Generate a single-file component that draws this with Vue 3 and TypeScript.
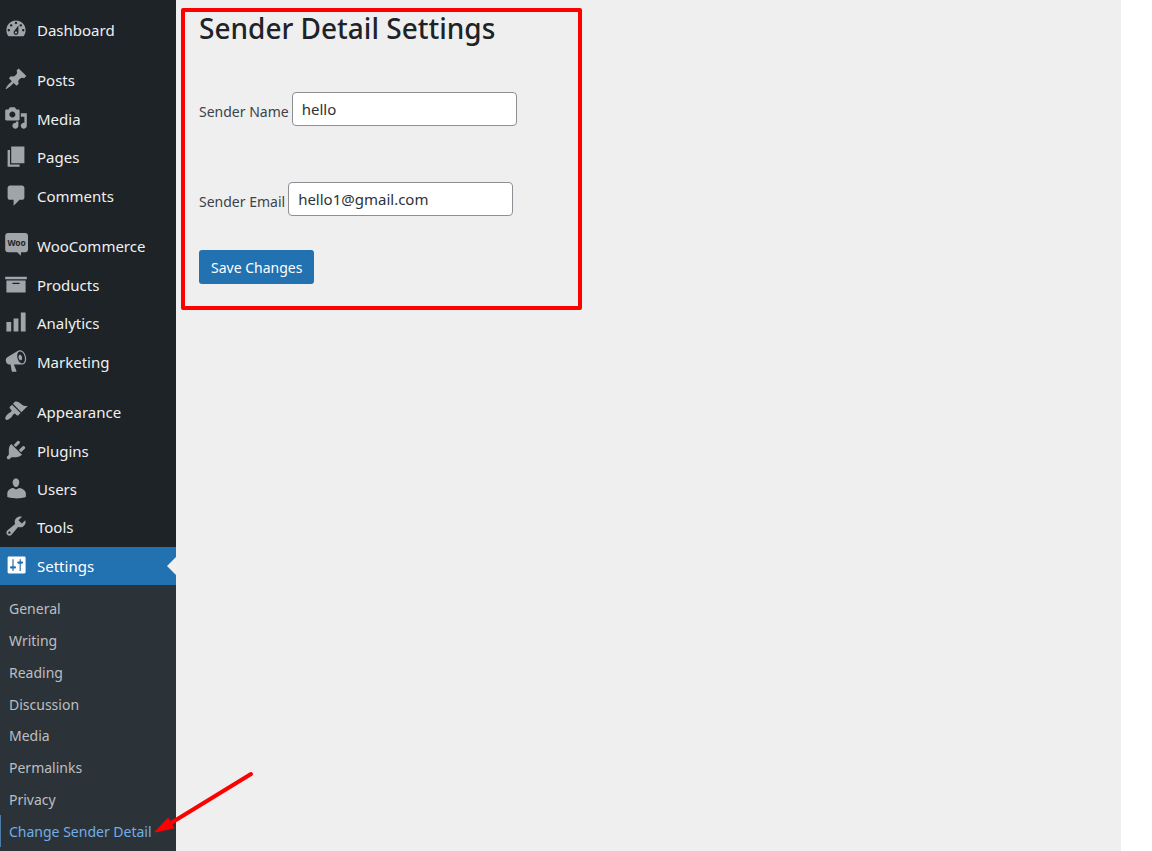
<script setup lang="ts">
import { ref } from 'vue'

interface MenuItem {
  label: string
  icon: string
  woo?: boolean
  current?: boolean
}

const groups: { name: string; items: MenuItem[] }[] = [
  {
    name: 'group-home',
    items: [
      {
        label: 'Dashboard',
        icon: 'M3.76 16h12.48c1.1-1.37 1.76-3.11 1.76-5 0-4.42-3.58-8-8-8s-8 3.58-8 8c0 1.89.66 3.63 1.76 5zM10 4c.55 0 1 .45 1 1s-.45 1-1 1-1-.45-1-1 .45-1 1-1zM6 6c.55 0 1 .45 1 1s-.45 1-1 1-1-.45-1-1 .45-1 1-1zm8 0c.55 0 1 .45 1 1s-.45 1-1 1-1-.45-1-1 .45-1 1-1zm-5.37 5.55L12 7v6c0 1.1-.9 2-2 2s-2-.9-2-2c0-.57.24-1.08.63-1.45zM4 10c.55 0 1 .45 1 1s-.45 1-1 1-1-.45-1-1 .45-1 1-1zm12 0c.55 0 1 .45 1 1s-.45 1-1 1-1-.45-1-1 .45-1 1-1zm-5 3c0-.55-.45-1-1-1s-1 .45-1 1 .45 1 1 1 1-.45 1-1z',
      },
    ],
  },
  {
    name: 'group-content',
    items: [
      {
        label: 'Posts',
        icon: 'M10.44 3.02l1.82-1.82 6.36 6.35-1.83 1.82c-1.05-.68-2.48-.57-3.41.36l-.75.75c-.92.93-1.04 2.35-.35 3.41l-1.83 1.82-2.41-2.41-2.8 2.79c-.42.42-3.38 2.71-3.8 2.29s1.86-3.39 2.28-3.81l2.79-2.79L4.1 9.36l1.83-1.82c1.05.69 2.48.57 3.4-.36l.75-.75c.93-.92 1.05-2.35.36-3.41z',
      },
      {
        label: 'Media',
        icon: 'M13 11V4c0-.55-.45-1-1-1h-1.67L9 1H5L3.67 3H2c-.55 0-1 .45-1 1v7c0 .55.45 1 1 1h10c.55 0 1-.45 1-1zM7 4.5c1.38 0 2.5 1.12 2.5 2.5S8.38 9.5 7 9.5 4.5 8.38 4.5 7 5.62 4.5 7 4.5zM14 6h5v10.5c0 1.38-1.12 2.5-2.5 2.5S14 17.88 14 16.5s1.12-2.5 2.5-2.5c.17 0 .34.02.5.05V9h-3V6zm-4 8.05V13h2v3.5c0 1.38-1.12 2.5-2.5 2.5S7 17.88 7 16.5 8.12 14 9.5 14c.17 0 .34.02.5.05z',
      },
      { label: 'Pages', icon: 'M6 16V2h11v14H6zm-1 1h8v2H3V5h2v12z' },
      {
        label: 'Comments',
        icon: 'M5 2h10c1.1 0 2 .9 2 2v8c0 1.1-.9 2-2 2h-2l-5 5v-5H5c-1.1 0-2-.9-2-2V4c0-1.1.9-2 2-2z',
      },
    ],
  },
  {
    name: 'group-store',
    items: [
      { label: 'WooCommerce', icon: 'M3.5 0h14a2.5 2.5 0 0 1 2.5 2.5v11a2.5 2.5 0 0 1-2.5 2.5h-3.3l-.2 3-3-3H3.5A2.5 2.5 0 0 1 1 13.5v-11A2.5 2.5 0 0 1 3.5 0z', woo: true },
      { label: 'Products', icon: 'M19 4v2H1V4h18zM2 7h16v10H2V7zm11 3V9H7v1h6z' },
      { label: 'Analytics', icon: 'M18 18V2h-4v16h4zm-6 0V7H8v11h4zm-6 0v-8H2v8h4z' },
      {
        label: 'Marketing',
        icon: 'M18.15 5.94c.46 1.62.38 3.22-.02 4.48-.42 1.28-1.26 2.18-2.3 2.48-.16.06-.26.06-.4.06-.06.02-.12.02-.18.02-.06.02-.14.02-.22.02h-6.8l2.22 5.5c.02.14-.06.26-.14.34-.08.1-.24.16-.34.16H6.95c-.1 0-.26-.06-.34-.16-.08-.08-.16-.2-.14-.34l-1-5.5H4.25l-.02-.02c-.5.06-1.08-.18-1.54-.62s-.88-1.08-1.06-1.88c-.24-.8-.2-1.56-.02-2.2.18-.62.58-1.08 1.06-1.3l.02-.02 9-5.4c.1-.06.18-.1.24-.16.06-.04.14-.08.24-.12.16-.08.28-.12.5-.18 1.04-.3 2.24.1 3.22.98s1.84 2.24 2.26 3.86zm-2.58 5.98h-.02c.4-.1.74-.34 1.04-.7.58-.7.86-1.76.86-3.04 0-.64-.1-1.3-.28-1.98-.34-1.36-1.02-2.5-1.78-3.24s-1.68-1.1-2.46-.88c-.82.22-1.4.96-1.7 2-.32 1.04-.28 2.36.06 3.72.38 1.36 1 2.5 1.8 3.24.78.74 1.62 1.1 2.48.88zm-2.54-7.08c.22-.04.42-.02.62.04.38.16.76.48 1.02 1s.42 1.2.42 1.78c0 .3-.04.56-.12.8-.18.48-.44.84-.86.94-.34.1-.8-.06-1.14-.4s-.64-.86-.78-1.5c-.18-.62-.12-1.24.02-1.72s.48-.84.82-.94z',
      },
    ],
  },
  {
    name: 'group-system',
    items: [
      {
        label: 'Appearance',
        icon: 'M14.48 11.06L7.41 3.99l1.5-1.5c.5-.56 2.3-.47 3.51.32 1.21.8 1.43 1.28 2.91 2.1 1.18.64 2.45 1.26 4.45.85zm-.71.71L6.7 4.7 4.93 6.47c-.39.39-.39 1.02 0 1.41l1.06 1.06c.39.39.39 1.03 0 1.42-.6.6-1.43 1.11-2.21 1.69-.35.26-.7.53-1.01.84C1.43 14.23.4 16.08 1.4 17.07c.99 1 2.84-.03 4.18-1.36.31-.31.58-.66.85-1.02.57-.78 1.08-1.61 1.69-2.21.39-.39 1.02-.39 1.41 0l1.06 1.06c.39.39 1.02.39 1.41 0z',
      },
      {
        label: 'Plugins',
        icon: 'M13.11 4.36L9.87 7.6 8 5.73l3.24-3.24c.35-.34 1.05-.2 1.56.32.52.51.66 1.21.31 1.55zm-8 1.77l.91-1.12 9.01 9.01-1.19.84c-.71.71-2.63 1.16-3.82 1.16H6.14L4.9 17.26c-.59.59-1.54.59-2.12 0-.59-.58-.59-1.53 0-2.12l1.24-1.24v-3.88c0-1.13.4-3.19 1.09-3.89zm7.26 3.97l3.24-3.24c.34-.35 1.04-.21 1.55.31.52.51.66 1.21.31 1.55l-3.24 3.25z',
      },
      {
        label: 'Users',
        icon: 'M10 9.25c-2.27 0-2.73-3.44-2.73-3.44C7 4.02 7.82 2 9.97 2c2.16 0 2.98 2.02 2.71 3.81 0 0-.41 3.44-2.68 3.44zm0 2.07L12.72 10c2.39 0 5.52 2.33 5.52 4.53v2.99s-4.15 1.13-7.74 1.13c-3.65 0-7.74-1.13-7.74-1.13v-2.99c0-2.25 2.44-4.48 4.97-4.48z',
      },
      {
        label: 'Tools',
        icon: 'M16.68 9.77c-1.34 1.34-3.3 1.67-4.95.99l-5.41 6.52c-.99.99-2.59.99-3.58 0s-.99-2.59 0-3.57l6.52-5.42c-.68-1.65-.35-3.61.99-4.95 1.28-1.28 3.12-1.62 4.72-1.06l-2.89 2.89 2.82 2.82 2.86-2.87c.53 1.58.18 3.39-1.08 4.65zM3.81 16.21c.4.39 1.04.39 1.43 0 .4-.4.4-1.04 0-1.43-.39-.4-1.03-.4-1.43 0-.39.39-.39 1.03 0 1.43z',
      },
      {
        label: 'Settings',
        icon: 'M18 16V4c0-.55-.45-1-1-1H4c-.55 0-1 .45-1 1v12c0 .55.45 1 1 1h13c.55 0 1-.45 1-1zM8 11h1c.55 0 1 .45 1 1s-.45 1-1 1H8v1.5c0 .28-.22.5-.5.5s-.5-.22-.5-.5V13H6c-.55 0-1-.45-1-1s.45-1 1-1h1V5.5c0-.28.22-.5.5-.5s.5.22.5.5V11zm6-2h-1v-1 6.5c0 .28-.0.5-.0.5h1V9h1c.55 0 1-.45 1-1s-.45-1-1-1h-1V5.5c0-.28-.22-.5-.5-.5s-.5.22-.5.5V7h-1c-.55 0-1 .45-1 1s.45 1 1 1h1z',
        current: true,
      },
    ],
  },
]

const submenu = ['General', 'Writing', 'Reading', 'Discussion', 'Media', 'Permalinks', 'Privacy', 'Change Sender Detail']
const activeSub = 'Change Sender Detail'

const senderName = ref('hello')
const senderEmail = ref('hello1@gmail.com')
</script>

<template>
  <div class="shell">
    <nav class="sidebar" aria-label="Main menu">
      <ul v-for="group in groups" :key="group.name" class="group" :class="group.name">
        <li v-for="item in group.items" :key="item.label">
          <a href="#" class="item" :class="{ current: item.current }">
            <svg class="icon" viewBox="0 0 20 20" aria-hidden="true">
              <path :d="item.icon" fill-rule="evenodd" />
              <text v-if="item.woo" class="woo-mark" x="10.5" y="10.5" text-anchor="middle">Woo</text>
            </svg>
            <span>{{ item.label }}</span>
          </a>
        </li>
      </ul>
      <div class="submenu-area">
        <ul class="submenu">
          <li v-for="label in submenu" :key="label">
            <a href="#" class="subitem" :class="{ active: label === activeSub }">{{ label }}</a>
          </li>
        </ul>
      </div>
    </nav>

    <main class="page">
      <form class="panel" @submit.prevent>
        <h1>Sender Detail Settings</h1>
        <div class="field">
          <label for="sender-name">Sender Name</label>
          <input id="sender-name" v-model="senderName" type="text" />
        </div>
        <div class="field">
          <label for="sender-email">Sender Email</label>
          <input id="sender-email" v-model="senderEmail" type="text" />
        </div>
        <button type="submit">Save Changes</button>
      </form>
    </main>

    <svg class="pointer" viewBox="0 0 100 64" aria-hidden="true">
      <path d="M96 4L16 53" fill="none" stroke="#f00" stroke-width="4" stroke-linecap="round" />
      <path d="M0 62L13 48L19 58Z" fill="#f00" stroke="#f00" stroke-linejoin="round" />
    </svg>
  </div>
</template>

<style>
body {
  margin: 0;
  background: #fff;
}
</style>

<style scoped>
.shell {
  position: relative;
  display: flex;
  min-height: 100vh;
  font-family: "Noto Sans", "Open Sans", sans-serif;
  font-size: 15px;
}

.sidebar {
  display: flex;
  flex-direction: column;
  flex: 0 0 176px;
  background: #1d2327;
}

ul {
  margin: 0;
  padding: 0;
  list-style: none;
}

.group {
  display: grid;
  grid-auto-rows: 1fr;
  height: 154px;
  margin-bottom: 12px;
}

.group-home {
  height: 38px;
  margin-top: 11px;
}

.group-system {
  height: 192px;
  margin-bottom: 0;
}

.item {
  position: relative;
  display: flex;
  align-items: center;
  gap: 9px;
  height: 100%;
  padding-left: 4px;
  color: #f0f0f1;
  text-decoration: none;
}

.item.current {
  background: #2271b1;
  color: #fff;
}

.item.current::after {
  content: "";
  position: absolute;
  right: 0;
  top: 50%;
  margin-top: -9px;
  border: 9px solid transparent;
  border-left-width: 0;
  border-right-color: #f0f0f1;
}

.icon {
  flex: none;
  width: 24px;
  height: 24px;
  margin-bottom: 2px;
  fill: #a0a5aa;
}

.current .icon {
  fill: #fff;
}

.woo-mark {
  fill: #1d2327;
  font-size: 7px;
  font-weight: 700;
}

.submenu-area {
  flex: 1;
  padding: 8px 0 4px;
  background: #2c3338;
}

.submenu {
  display: grid;
  grid-auto-rows: 1fr;
  height: 254px;
}

.subitem {
  display: flex;
  align-items: center;
  height: 100%;
  padding-left: 9px;
  font-size: 14px;
  color: #bcbfc2;
  text-decoration: none;
  white-space: nowrap;
}

.subitem.active {
  padding-left: 8px;
  border-left: 1px solid #4f7ba8;
  color: #72aee6;
}

.page {
  flex: 1;
  margin-right: 31px;
  padding: 8px 5px;
  background: #efefef;
}

.panel {
  box-sizing: border-box;
  max-width: 401px;
  padding: 0 14px 22px;
  border: 4px solid #f00;
  border-radius: 2px;
}

h1 {
  margin: 0 0 48px;
  font-size: 28px;
  font-weight: 500;
  line-height: 32px;
  color: #1d2327;
}

.field {
  display: flex;
  align-items: center;
  gap: 3px;
  margin-bottom: 56px;
}

.field:nth-of-type(2) {
  margin-bottom: 34px;
}

label {
  padding-top: 4px;
  font-size: 14px;
  color: #3c434a;
}

input {
  box-sizing: border-box;
  width: 225px;
  height: 34px;
  padding: 0 9px;
  border: 1px solid #8c8f94;
  border-radius: 4px;
  background: #fff;
  font: inherit;
  color: #2c3338;
}

button {
  height: 34px;
  padding: 0 12px;
  border: 0;
  border-radius: 3px;
  background: #2271b1;
  color: #fff;
  font: inherit;
  font-size: 14px;
}

.pointer {
  position: absolute;
  left: 155px;
  top: 770px;
  width: 100px;
  height: 64px;
}
</style>
